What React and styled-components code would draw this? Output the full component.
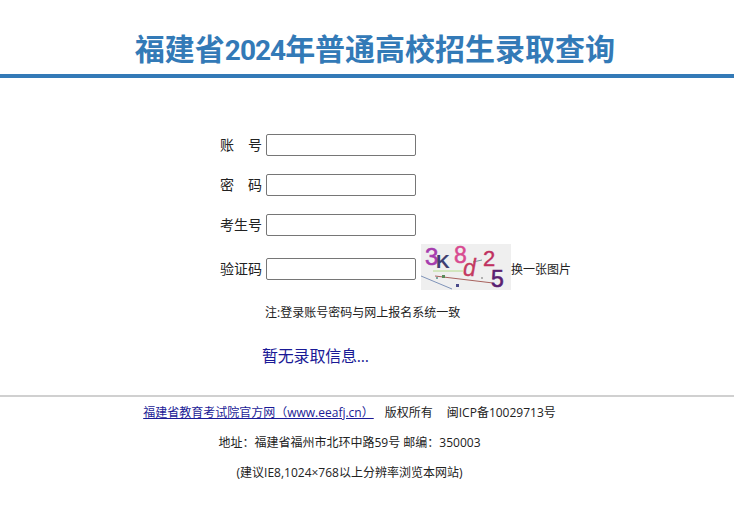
import React from "react"
import styled, { createGlobalStyle } from "styled-components"

const FONT = `"Open Sans", "Noto Sans CJK SC", sans-serif`

const GlobalStyle = createGlobalStyle`
  html, body {
    margin: 0;
    padding: 0;
    background: #fff;
    font-family: ${FONT};
    color: #222;
  }
`

const Header = styled.div`
  height: 78px;
  box-sizing: border-box;
  border-bottom: 4px solid #337ab7;
  padding-left: 16px;
  display: flex;
  justify-content: center;
  align-items: flex-end;
`

const Title = styled.h1`
  margin: 0 0 1px;
  font-size: 30px;
  line-height: 44px;
  font-weight: 700;
  color: #337ab7;
  font-family: Roboto, "Noto Sans CJK SC", sans-serif;
`

const Year = styled.span`
  font-size: 28px;
  letter-spacing: -1px;
`

const Form = styled.form`
  display: flex;
  flex-direction: column;
  padding: 56px 0 0 212px;
`

const Row = styled.div`
  display: flex;
  align-items: center;
  height: 22px;
  margin-bottom: 18px;
`

const CaptchaRow = styled(Row)`
  margin-top: 4px;
  margin-bottom: 19px;
`

const Label = styled.label`
  width: 50px;
  margin-right: 4px;
  font-size: 14px;
  line-height: 22px;
  text-align: right;
  white-space: pre;
`

const TextInput = styled.input`
  width: 150px;
  height: 22px;
  box-sizing: border-box;
  border: 1px solid #767676;
  border-radius: 2px;
  background: #fff;
  padding: 1px 2px;
`

const Captcha = styled.svg`
  width: 90px;
  height: 46px;
  margin-left: 5px;
  margin-top: -4px;
  flex: none;
`

const Refresh = styled.span`
  font-size: 12px;
  white-space: nowrap;
`

const Note = styled.div`
  margin: 5px 0 0 53px;
  font-size: 12px;
  line-height: 18px;
`

const Status = styled.div`
  margin: 23px 0 0 50px;
  font-size: 16px;
  line-height: 22px;
  letter-spacing: -0.2px;
  color: #1a1a96;
`

const Divider = styled.hr`
  margin: 28px 0 0;
  border: 0;
  height: 2px;
  background: #d0d0d0;
`

const Footer = styled.div`
  padding: 7px 35px 0 0;
  font-size: 12px;
  text-align: center;
`

const FooterLine = styled.p`
  margin: 0 0 13px;
  line-height: 17px;
`

const FooterLink = styled.a`
  color: #1a1a96;
  text-decoration: underline;
  margin-right: 11px;
`

const Gap = styled.span`
  margin-right: 14px;
`

const CaptchaImage = () => (
  <Captcha viewBox="0 0 90 46">
    <rect width="90" height="46" fill="#efefef" />
    <line x1="0" y1="32" x2="31" y2="45" stroke="#7f93b8" strokeWidth="1" />
    <line x1="12" y1="27" x2="42" y2="27" stroke="#b4dc8c" strokeWidth="1" />
    <line x1="14" y1="32" x2="72" y2="39" stroke="#a8625e" strokeWidth="1" />
    <line x1="52" y1="18" x2="61" y2="16" stroke="#6f9a9a" strokeWidth="1" />
    <rect x="21" y="31" width="3" height="3" fill="#5a8a5a" />
    <rect x="15" y="33" width="2" height="2" fill="#7aa8a0" />
    <rect x="35" y="40" width="3" height="3" fill="#4a4a8a" />
    <rect x="60" y="33" width="2" height="2" fill="#b0b0b0" />
    <text x="4" y="21" fontFamily="Liberation Sans" fontSize="24" stroke="#a63cae" strokeWidth="0.6" fill="#a63cae">3</text>
    <text x="15" y="24" fontFamily="Liberation Sans" fontSize="19" fontWeight="700" fill="#3f3f72">K</text>
    <text x="33" y="19" fontFamily="Liberation Sans" fontSize="23" stroke="#d84a90" strokeWidth="0.5" fill="#d84a90">8</text>
    <text x="42" y="32" fontFamily="Liberation Sans" fontStyle="italic" fontSize="23" stroke="#c43a60" strokeWidth="0.3" fill="#c43a60">d</text>
    <text x="62" y="22" fontFamily="Liberation Sans" fontSize="22" stroke="#c03060" strokeWidth="0.4" fill="#c03060">2</text>
    <text x="70" y="43" fontFamily="Liberation Sans" fontSize="23" stroke="#5a2070" strokeWidth="0.6" fill="#5a2070">5</text>
  </Captcha>
)

export default function App() {
  return (
    <>
      <GlobalStyle />
      <Header>
        <Title>福建省<Year>2024</Year>年普通高校招生录取查询</Title>
      </Header>
      <Form>
        <Row>
          <Label>账　号</Label>
          <TextInput type="text" />
        </Row>
        <Row>
          <Label>密　码</Label>
          <TextInput type="password" />
        </Row>
        <Row>
          <Label>考生号</Label>
          <TextInput type="text" />
        </Row>
        <CaptchaRow>
          <Label>验证码</Label>
          <TextInput type="text" />
          <CaptchaImage />
          <Refresh>换一张图片</Refresh>
        </CaptchaRow>
        <Note>注:登录账号密码与网上报名系统一致</Note>
        <Status>暂无录取信息...</Status>
      </Form>
      <Divider />
      <Footer>
        <FooterLine>
          <FooterLink href="#">福建省教育考试院官方网（www.eeafj.cn）</FooterLink>
          <Gap>版权所有</Gap>闽ICP备10029713号
        </FooterLine>
        <FooterLine>地址：福建省福州市北环中路59号 邮编：350003</FooterLine>
        <FooterLine>(建议IE8,1024×768以上分辨率浏览本网站)</FooterLine>
      </Footer>
    </>
  )
}
